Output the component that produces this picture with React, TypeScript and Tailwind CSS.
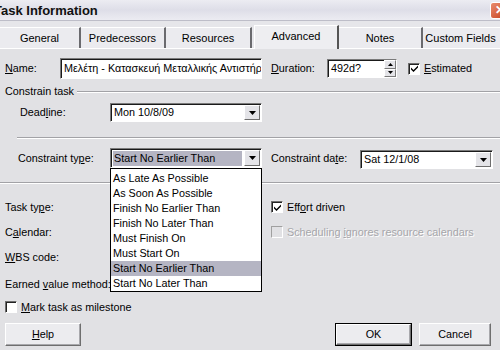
import React from "react";

const Check = () => (
  <svg width="9" height="9" viewBox="0 0 9 9" className="block">
    <path d="M1 3.5 L3.5 6 L8 1.5 L8 3.5 L3.5 8 L1 5.5 Z" fill="#000" />
  </svg>
);

const CheckBox = ({ checked, disabled }: { checked?: boolean; disabled?: boolean }) => (
  <div
    className={
      "w-[12px] h-[12px] flex items-center justify-center shrink-0 border " +
      (disabled
        ? "border-t-[#a0a0a0] border-l-[#a0a0a0] border-b-white border-r-white bg-[#e1e1e4]"
        : "border-t-[#6e6e6e] border-l-[#6e6e6e] border-b-white border-r-white bg-white shadow-[inset_1px_1px_0_#222]")
    }
  >
    {checked && <Check />}
  </div>
);

const DropBtn = () => (
  <div className="w-[16px] h-full shrink-0 bg-[#e4e4e8] border border-t-white border-l-white border-b-[#6e6e6e] border-r-[#6e6e6e] flex items-center justify-center">
    <svg width="7" height="4" viewBox="0 0 7 4">
      <path d="M0 0 H7 L3.5 4 Z" fill="#000" />
    </svg>
  </div>
);

const Sunken = ({ className, children }: { className?: string; children?: React.ReactNode }) => (
  <div
    className={
      "bg-white border border-t-[#7a7a7a] border-l-[#7a7a7a] border-b-white border-r-white shadow-[inset_1px_1px_0_#1a1a1a] flex items-center overflow-hidden " +
      (className || "")
    }
  >
    {children}
  </div>
);

const Sep = ({ className }: { className?: string }) => (
  <div className={"h-[2px] border-t border-t-[#a2a2a6] border-b border-b-white " + (className || "")} />
);

const U = ({ children }: { children: React.ReactNode }) => <span className="underline underline-offset-[1px]">{children}</span>;

const Btn = ({ children, def, className }: { children: React.ReactNode; def?: boolean; className?: string }) => (
  <div className={"h-[23px] " + (def ? "border border-black " : "") + (className || "")}>
    <div className="h-full w-full bg-[#ececef] border border-t-white border-l-white border-b-[#6e6e6e] border-r-[#6e6e6e] shadow-[inset_-1px_-1px_0_#a8a8ac] flex items-center justify-center">
      {children}
    </div>
  </div>
);

const items = [
  "As Late As Possible",
  "As Soon As Possible",
  "Finish No Earlier Than",
  "Finish No Later Than",
  "Must Finish On",
  "Must Start On",
  "Start No Earlier Than",
  "Start No Later Than",
];

export default function App() {
  return (
    <div className="w-[500px] h-[350px] overflow-hidden bg-[#e1e1e4] text-[10.8px] text-black font-['Liberation_Sans',Arial,sans-serif] leading-none select-none">
      {/* title bar */}
      <div className="h-[21px] flex items-center justify-between bg-gradient-to-b from-[#ececf2] via-[#dedee8] to-[#ececf2] border-b border-b-[#bdbdc8]">
        <span className="ml-[-6px] font-bold text-[13px] text-[#111]">Task Information</span>
        <div className="w-[20px] h-[17px] mr-[-10px] rounded-[3px] bg-gradient-to-br from-[#e98a6c] to-[#c43a12] border border-white flex items-center justify-start pl-[4px]">
          <span className="text-white font-bold text-[12px]">✕</span>
        </div>
      </div>
      {/* tabs */}
      <div className="h-[28px] flex items-end bg-[#e6e6ea] border-b border-b-white relative text-[11px]">
        {[
          ["General", 81],
          ["Predecessors", 85],
          ["Resources", 86],
        ].map(([t, w]) => (
          <div
            key={t as string}
            style={{ width: w as number }}
            className="h-[21px] bg-[#ebebef] border-t border-t-white border-r-2 border-r-[#6a6a6e] flex items-center justify-center"
          >
            {t}
          </div>
        ))}
        <div className="w-[85px] h-[24px] ml-[2px] mb-[-1px] bg-[#eeeef1] border-t border-t-white border-l border-l-white border-r-2 border-r-[#555] flex items-center justify-center pb-[2px]">
          Advanced
        </div>
        <div className="w-[84px] h-[21px] bg-[#ebebef] border-t border-t-white border-r-2 border-r-[#6a6a6e] flex items-center justify-center">
          Notes
        </div>
        <div className="flex-1 h-[21px] bg-[#ebebef] border-t border-t-white flex items-center justify-center pr-[2px]">
          Custom Fields
        </div>
      </div>

      {/* content */}
      <div className="pt-[9px]">
        {/* name row */}
        <div className="h-[21px] flex items-center">
          <div className="w-[55px] ml-[5px]">
            <U>N</U>ame:
          </div>
          <Sunken className="w-[202px] h-full pl-[3px] whitespace-nowrap">
            Μελέτη - Κατασκευή Μεταλλικής Αντιστήριξης
          </Sunken>
          <div className="w-[56px] ml-[9px]">
            <U>D</U>uration:
          </div>
          <Sunken className="w-[70px] h-[19px] pl-[3px] justify-between">
            <span>492d?</span>
            <div className="w-[12px] h-full flex flex-col">
              <div className="flex-1 bg-[#e4e4e8] border border-t-white border-l-white border-b-[#7a7a7a] border-r-[#7a7a7a] flex items-center justify-center">
                <svg width="5" height="3" viewBox="0 0 5 3"><path d="M0 3 H5 L2.5 0 Z" fill="#000" /></svg>
              </div>
              <div className="flex-1 bg-[#e4e4e8] border border-t-white border-l-white border-b-[#7a7a7a] border-r-[#7a7a7a] flex items-center justify-center">
                <svg width="5" height="3" viewBox="0 0 5 3"><path d="M0 0 H5 L2.5 3 Z" fill="#000" /></svg>
              </div>
            </div>
          </Sunken>
          <div className="ml-[11px] flex items-center gap-[4px]">
            <CheckBox checked />
            <span>
              <U>E</U>stimated
            </span>
          </div>
        </div>

        {/* constrain task group */}
        <div className="h-[15px] mt-[5px] flex items-center">
          <span className="ml-[5px]">Constrain task</span>
          <Sep className="flex-1 ml-[3px]" />
        </div>

        {/* deadline */}
        <div className="h-[19px] mt-[4px] flex items-center">
          <div className="w-[90px] ml-[20px]">
            Dead<U>l</U>ine:
          </div>
          <Sunken className="w-[152px] h-full pl-[3px] pr-[1px] justify-between">
            <span>Mon 10/8/09</span>
            <div className="h-[15px]">
              <DropBtn />
            </div>
          </Sunken>
        </div>

        <Sep className="mt-[15px] ml-[17px]" />

        {/* constraint row */}
        <div className="h-[20px] mt-[9px] flex items-center">
          <div className="w-[92px] ml-[18px]">
            Constraint ty<U>p</U>e:
          </div>
          <div className="relative w-[152px] h-full">
            <Sunken className="w-full h-full pl-[2px] pr-[1px] justify-between">
              <div className="flex-1 h-[15px] bg-[#b5b5c3] flex items-center pl-[1px] mr-[2px]">Start No Earlier Than</div>
              <div className="h-[16px]">
                <DropBtn />
              </div>
            </Sunken>
            {/* dropdown list */}
            <div className="absolute left-0 top-full w-[152px] bg-white border border-black pt-[2px] z-10">
              {items.map((it, i) => (
                <div
                  key={it}
                  className={"h-[15px] flex items-center pl-[2px] " + (i === 6 ? "bg-[#b5b5c3]" : "")}
                >
                  {it}
                </div>
              ))}
            </div>
          </div>
          <div className="w-[89px] ml-[9px]">
            Constraint da<U>t</U>e:
          </div>
          <Sunken className="w-[133px] h-[19px] mt-[3px] pl-[3px] pr-[1px] justify-between">
            <span>Sat 12/1/08</span>
            <div className="h-[15px]">
              <DropBtn />
            </div>
          </Sunken>
        </div>

        <Sep className="mt-[14px]" />

        {/* lower rows */}
        <div className="h-[16px] mt-[15px] flex items-center">
          <div className="w-[266px] ml-[5px]">
            Task ty<U>p</U>e:
          </div>
          <div className="flex items-center gap-[4px]">
            <CheckBox checked />
            <span>
              Eff<U>o</U>rt driven
            </span>
          </div>
        </div>
        <div className="h-[16px] mt-[9px] flex items-center">
          <div className="w-[266px] ml-[5px]">
            C<U>a</U>lendar:
          </div>
          <div className="flex items-center gap-[4px] text-[#a6a6aa] [text-shadow:1px_1px_0_#ffffff]">
            <CheckBox disabled />
            <span>
              Scheduling <U>i</U>gnores resource calendars
            </span>
          </div>
        </div>
        <div className="h-[16px] mt-[9px] flex items-center">
          <div className="ml-[5px]">
            <U>W</U>BS code:
          </div>
        </div>
        <div className="h-[16px] mt-[11px] flex items-center">
          <div className="ml-[5px]">
            Earned <U>v</U>alue method:
          </div>
        </div>
        <div className="h-[16px] mt-[7px] flex items-center gap-[4px] ml-[5px]">
          <CheckBox />
          <span>
            <U>M</U>ark task as milestone
          </span>
        </div>

        {/* buttons */}
        <div className="mt-[8px] flex items-center">
          <Btn className="w-[76px] ml-[5px]">
            <U>H</U>elp
          </Btn>
          <div className="flex-1" />
          <Btn def className="w-[77px]">
            OK
          </Btn>
          <Btn className="w-[72px] ml-[7px] mr-[9px]">Cancel</Btn>
        </div>
      </div>
    </div>
  );
}
